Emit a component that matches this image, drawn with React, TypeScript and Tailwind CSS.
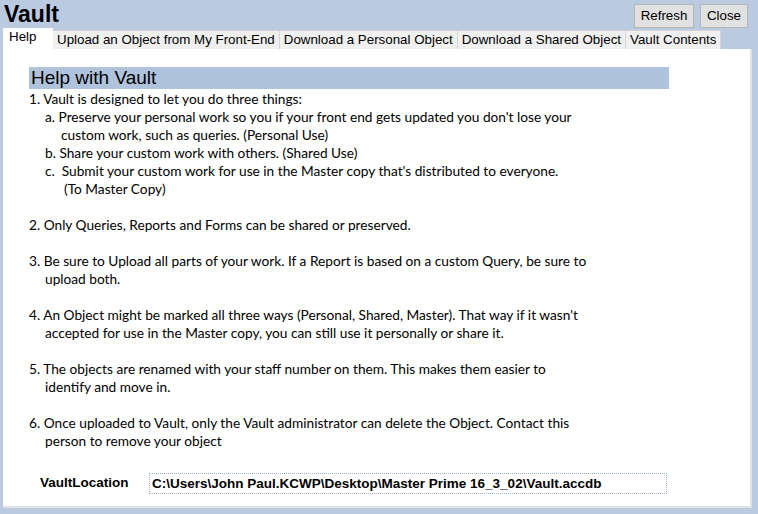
import React from "react";

const tabs = [
  "Upload an Object from My Front-End",
  "Download a Personal Object",
  "Download a Shared Object",
  "Vault Contents",
];

function Line({ indent = 0, children }: { indent?: number; children: React.ReactNode }) {
  return (
    <div className="h-[18px] whitespace-pre leading-[18px]" style={{ paddingLeft: indent }}>
      {children}
    </div>
  );
}

export default function App() {
  return (
    <div className="w-[758px] h-[514px] bg-[#b9cae1] overflow-hidden flex flex-col" style={{ fontFamily: "Arial, 'Liberation Sans', sans-serif" }}>
      <div className="flex items-start justify-between h-[29px]">
        <div className="pl-[4px] pt-[1px] text-[23px] font-bold leading-[26px] text-black">Vault</div>
        <div className="flex gap-[6px] pt-[4px] pr-[10px]">
          <button className="h-[24px] w-[60px] border border-[#b4b4b4] bg-[#e1e1e1] text-[13.33px] text-black">Refresh</button>
          <button className="h-[24px] w-[48px] border border-[#b4b4b4] bg-[#e1e1e1] text-[13.33px] text-black">Close</button>
        </div>
      </div>
      <div className="flex items-end h-[20px] pl-[3px]">
        <div className="h-[21px] w-[50px] bg-white pl-[6px] text-[13.33px] leading-[18px] text-black">Help</div>
        {tabs.map((t) => (
          <div key={t} className="h-[19px] border-t border-r border-[#d4d4d4] bg-[#f0f0f0] px-[4px] text-[13.33px] leading-[18px] text-black whitespace-nowrap">
            {t}
          </div>
        ))}
      </div>
      <div className="ml-[3px] w-[749px] h-[459px] bg-white border-r-2 border-b-2 border-[#e2e2e2] pl-[26px] pt-[18px]">
        <div className="w-[640px] h-[22px] bg-[#b0c3dd] pl-[2px] text-[19px] leading-[22px] text-black">Help with Vault</div>
        <div className="pt-[1px] text-[13.7px] text-black" style={{ fontFamily: "Lato, 'Open Sans', sans-serif" }}>
          <Line>1. Vault is designed to let you do three things:</Line>
          <Line indent={16}>a. Preserve your personal work so you if your front end gets updated you don't lose your</Line>
          <Line indent={32}>custom work, such as queries. (Personal Use)</Line>
          <Line indent={16}>b. Share your custom work with others. (Shared Use)</Line>
          <Line indent={16}>c.  Submit your custom work for use in the Master copy that's distributed to everyone.</Line>
          <Line indent={35}>(To Master Copy)</Line>
          <Line> </Line>
          <Line>2. Only Queries, Reports and Forms can be shared or preserved.</Line>
          <Line> </Line>
          <Line>3. Be sure to Upload all parts of your work. If a Report is based on a custom Query, be sure to</Line>
          <Line indent={16}>upload both.</Line>
          <Line> </Line>
          <Line>4. An Object might be marked all three ways (Personal, Shared, Master). That way if it wasn't</Line>
          <Line indent={16}>accepted for use in the Master copy, you can still use it personally or share it.</Line>
          <Line> </Line>
          <Line>5. The objects are renamed with your staff number on them. This makes them easier to</Line>
          <Line indent={16}>identify and move in.</Line>
          <Line> </Line>
          <Line>6. Once uploaded to Vault, only the Vault administrator can delete the Object. Contact this</Line>
          <Line indent={16}>person to remove your object</Line>
        </div>
        <div className="mt-[23px] flex items-center">
          <div className="w-[120px] pl-[11px] text-[13.5px] font-bold text-black">VaultLocation</div>
          <div className="h-[21px] w-[518px] border border-dotted border-[#9fb4cf] pl-[2px] text-[13.5px] font-bold leading-[19px] text-black">
            C:\Users\John Paul.KCWP\Desktop\Master Prime 16_3_02\Vault.accdb
          </div>
        </div>
      </div>
    </div>
  );
}
